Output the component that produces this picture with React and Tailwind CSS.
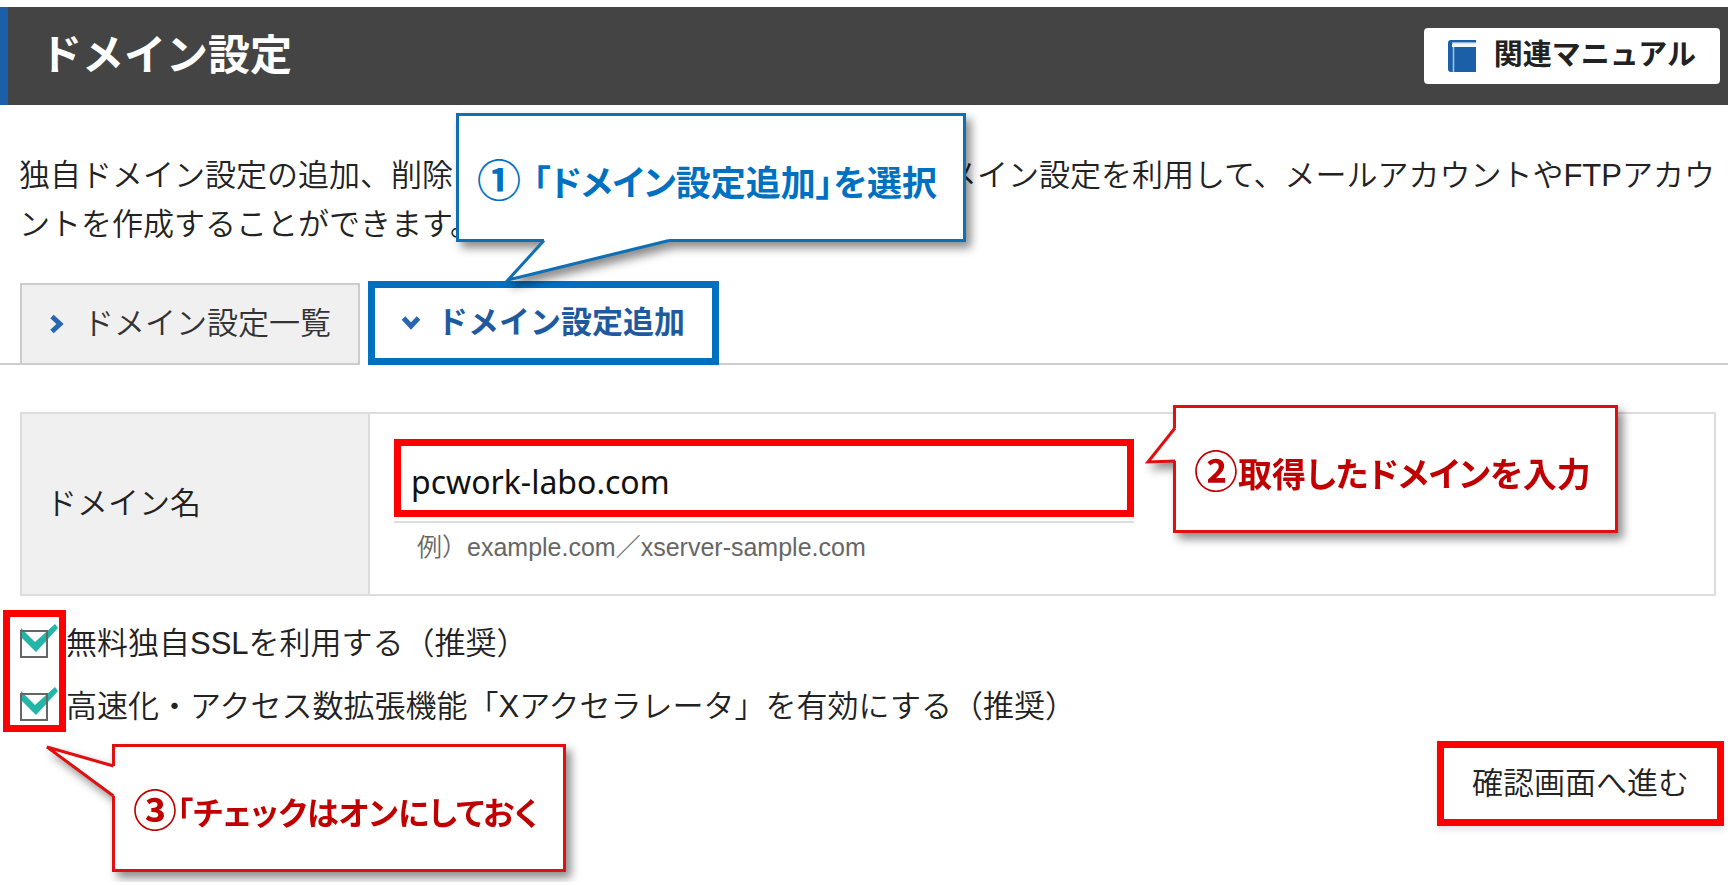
/**
 * Domain settings page with the numbered walkthrough callouts
 */

const DESCRIPTION =
  '独自ドメイン設定の追加、削除を行うことができます。追加したドメイン設定を利用して、メールアカウントやFTPアカウントを作成することができます。'

const options = [
  { id: 'ssl', label: '無料独自SSLを利用する（推奨）' },
  { id: 'accelerator', label: '高速化・アクセス数拡張機能「Xアクセラレータ」を有効にする（推奨）' },
]

function BookIcon() {
  return (
    <svg className="w-7 h-8" viewBox="0 0 28 32" aria-hidden="true">
      <path d="M3 0H28V2H5V7H28V32H3Q0 32 0 29V3Q0 0 3 0Z" fill="#1a5fa8" />
      <path d="M4 2H28V3.500H4Z" fill="#8fb4dc" />
      <path d="M4 3.500H28V7H4Z" fill="#f3f7fc" />
      <path d="M5.500 7V32" stroke="#a9c6e6" strokeWidth="1.500" />
    </svg>
  )
}

function ChevronRight() {
  return (
    <svg className="w-[14px] h-5" viewBox="0 0 14 20" fill="none" aria-hidden="true">
      <path d="M2 2.500L10 10L2 17.500" stroke="#2767b0" strokeWidth="5" />
    </svg>
  )
}

function ChevronDown() {
  return (
    <svg className="w-5 h-[14px]" viewBox="0 0 20 14" fill="none" aria-hidden="true">
      <path d="M2.500 2L10 10L17.500 2" stroke="#2767b0" strokeWidth="5" />
    </svg>
  )
}

function Callout({ className, number, children, tail }) {
  return (
    <div
      className={`absolute z-10 flex items-center border-3 bg-white pt-2 pl-[18px] leading-10 font-bold whitespace-nowrap drop-shadow-[5px_6px_5px_rgba(0,0,0,0.45)] [font-feature-settings:'palt'] ${className}`}
    >
      <span className="text-[44px]">{number}</span>
      <span className="pt-1">{children}</span>
      {tail}
    </div>
  )
}

function OptionRow({ id, label }) {
  return (
    <div className="flex items-center gap-[18px]">
      <span className="relative flex">
        <input
          id={id}
          type="checkbox"
          defaultChecked
          className="peer z-1 size-7 appearance-none border-2 border-[#666]"
        />
        <svg
          className="pointer-events-none absolute -top-1.5 left-0 hidden h-7 w-[38px] peer-checked:block"
          viewBox="0 0 38 28"
          aria-hidden="true"
        >
          <path d="M1 4L15 18L35 0L38 4L16 28L1 13Z" fill="#22b5a8" />
        </svg>
      </span>
      <label htmlFor={id} className="leading-[49px]">{label}</label>
    </div>
  )
}

export default function App() {
  return (
    <div className="overflow-hidden bg-white pb-14 text-[31px] font-[350] text-[#222] [font-family:'Liberation_Sans','Noto_Sans_CJK_JP',sans-serif]">
      {/* Header */}
      <header className="mt-[7px] flex h-[98px] items-center justify-between border-l-8 border-[#1a5fa8] bg-[#444] pr-2 pl-8">
        <h1 className="text-[42px] leading-[60px] font-bold text-white">ドメイン設定</h1>
        <a
          href="#manual"
          className="flex h-14 items-center gap-[18px] rounded-sm bg-white px-6 text-[29px] font-bold"
        >
          <BookIcon />
          関連マニュアル
        </a>
      </header>

      <p className="mt-[46px] pr-1.5 pl-[19px] leading-[49px]">{DESCRIPTION}</p>

      {/* Tabs */}
      <nav className="mt-8 flex h-[84px] items-stretch gap-2">
        <div className="w-5 border-b-2 border-[#ccc]" />
        <a
          href="#list"
          className="-ml-2 mt-0.5 flex w-[340px] items-center gap-[19px] border-2 border-[#ccc] bg-[#f0f0f0] pl-7 text-[#333]"
        >
          <ChevronRight />
          ドメイン設定一覧
        </a>
        <div className="relative flex w-[351px]">
          <a
            href="#add"
            className="flex flex-1 items-center gap-4 border-7 border-[#0070c0] bg-white pl-[26px] font-bold text-[#1f5a9f]"
          >
            <ChevronDown />
            ドメイン設定追加
          </a>
          <Callout
            number="①"
            className="-top-[168px] left-[88px] h-[129px] w-[510px] gap-3 border-[#0f6fb5] text-[35px] text-[#0070c0]"
            tail={
              <svg className="absolute top-[123px] left-[46px] h-[46px] w-[170px]" viewBox="0 0 170 46">
                <path d="M39 0V1.500L3 41L164 1.500V0Z" fill="#fff" />
                <path d="M39 1.500L3 41L164 1.500" fill="none" stroke="#0f6fb5" strokeWidth="3" />
              </svg>
            }
          >
            「ドメイン設定追加」を選択
          </Callout>
        </div>
        <div className="-ml-2 flex-1 border-b-2 border-[#ccc]" />
      </nav>

      {/* Form */}
      <form onSubmit={(e) => e.preventDefault()}>
        <div className="mt-[47px] mr-3 ml-5 grid h-[184px] grid-cols-[348px_1fr] border-2 border-[#ddd]">
          <label htmlFor="domain" className="flex items-center border-r-2 border-[#ddd] bg-[#f0f0f0] pl-6">
            ドメイン名
          </label>
          <div className="pt-[25px] pl-6">
            <div className="relative w-[740px] border-b-2 border-[#ddd] pb-1">
              <input
                id="domain"
                type="text"
                defaultValue="pcwork-labo.com"
                className="block h-[78px] w-full border-7 border-[#f00] bg-white pt-1.5 pl-2.5 text-[32px] font-normal text-[#111] outline-none [font-family:'Noto_Sans','Noto_Sans_CJK_JP',sans-serif]"
              />
              <Callout
                number="②"
                className="-top-[34px] left-full ml-[39px] h-32 w-[445px] border-[#e01010] text-[34px] text-[#c00000]"
                tail={
                  <svg className="absolute top-[18px] -left-[32px] h-[42px] w-[34px]" viewBox="0 0 34 42">
                    <path d="M34 2H31L4 36L31 35H34Z" fill="#fff" />
                    <path d="M31 2L4 36L31 35" fill="none" stroke="#e01010" strokeWidth="3" />
                  </svg>
                }
              >
                取得したドメインを入力
              </Callout>
            </div>
            <p className="pl-[23px] text-[25px] leading-[48px] text-[#666]">例）example.com／xserver-sample.com</p>
          </div>
        </div>

        <div className="relative mt-[23px] flex flex-col gap-3.5 pl-5">
          {options.map((option) => (
            <OptionRow key={option.id} id={option.id} label={option.label} />
          ))}
          <div className="pointer-events-none absolute -top-[9px] left-[3px] h-[122px] w-[63px] border-7 border-[#f00]" />
          <Callout
            number="③"
            className="top-[125px] left-[112px] h-32 w-[454px] border-[#e01010] text-[32px] text-[#c00000]"
            tail={
              <svg className="absolute -top-[3px] -left-[72px] h-[60px] w-[74px]" viewBox="0 0 74 60">
                <path d="M74 22H70.500L4 3L70.500 52H74Z" fill="#fff" />
                <path d="M70.500 22L4 3L70.500 52" fill="none" stroke="#e01010" strokeWidth="3" />
              </svg>
            }
          >
            「チェックはオンにしておく
          </Callout>
        </div>

        <div className="mt-[10px] flex justify-end pr-1">
          <button
            type="submit"
            className="h-[85px] w-[287px] border-7 border-[#f00] bg-white pt-0.5 shadow-[0_4px_6px_rgba(0,0,0,0.1)]"
          >
            確認画面へ進む
          </button>
        </div>
      </form>
    </div>
  )
}
